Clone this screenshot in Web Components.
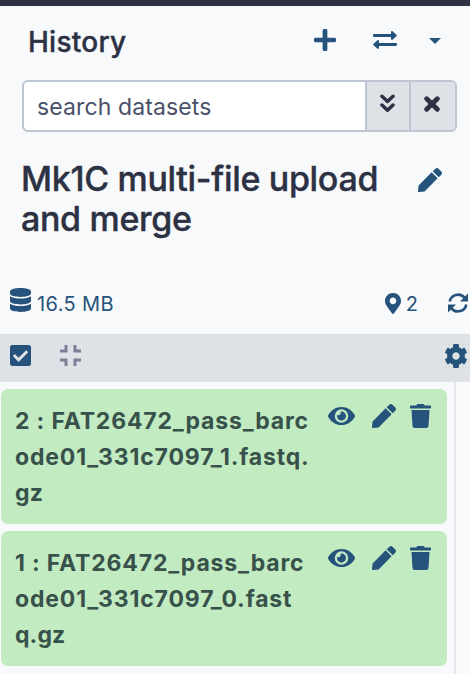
<!DOCTYPE html>
<html lang="en">
<head>
<meta charset="utf-8">
<title>History</title>
<style>
html,body{margin:0;height:100%;overflow:hidden}
body{font-family:Inter,"Liberation Sans",sans-serif;background:#f8f9fb;color:#2c3143}
</style>
</head>
<body>
<history-panel></history-panel>
<script>
const ICONS = {
  plus: ['0 32 448 448', '<path d="M416 208H272V64c0-17.67-14.33-32-32-32h-32c-17.67 0-32 14.33-32 32v144H32c-17.67 0-32 14.33-32 32v32c0 17.67 14.33 32 32 32h144v144c0 17.67 14.33 32 32 32h32c17.67 0 32-14.33 32-32V304h144c17.67 0 32-14.33 32-32v-32c0-17.67-14.33-32-32-32z"/>'],
  swap: ['0 0 24 18', '<path d="M1 3.1h17V1.2c0-1.1 1-1.5 1.8-.8l3.6 3.3c.6.5.6 1.1 0 1.6l-3.6 3.3c-.8.7-1.8.3-1.8-.8V5.9H1C.4 5.9 0 5.4 0 4.8v-.6c0-.6.4-1.1 1-1.1zM23 12.1H6v-1.9c0-1.1-1-1.5-1.8-.8L.6 12.7c-.6.5-.6 1.1 0 1.6l3.6 3.3c.8.7 1.8.3 1.8-.8v-1.9h17c.6 0 1-.5 1-1.1v-.6c0-.6-.4-1.1-1-1.1z"/>'],
  caret: ['0 0 12 6', '<path d="M0 0h12L6 6z"/>'],
  down: ['0 0 15 19', '<path d="M2 2.3l5.5 5.2L13 2.3M2 11l5.5 5.2L13 11" fill="none" stroke="currentColor" stroke-width="3.5" stroke-linecap="round" stroke-linejoin="round"/>'],
  close: ['0 0 16 16', '<path d="M2.7 2.7l10.6 10.6M13.3 2.7L2.7 13.3" fill="none" stroke="currentColor" stroke-width="4.8" stroke-linecap="round"/>'],
  pen: ['0 0 512 512', '<path d="M290.74 93.24l128.02 128.02-277.99 277.99-114.14 12.6C11.35 513.54-1.56 500.62.14 485.34l12.7-114.22 277.9-277.88zm207.2-19.06l-60.11-60.11c-18.75-18.75-49.16-18.75-67.91 0l-56.55 56.55 128.02 128.02 56.55-56.55c18.75-18.76 18.75-49.16 0-67.91z"/>'],
  database: ['0 0 448 512', '<path d="M448 73.143v45.714C448 159.143 347.667 192 224 192S0 159.143 0 118.857V73.143C0 32.857 100.333 0 224 0s224 32.857 224 73.143zM448 176v102.857C448 319.143 347.667 352 224 352S0 319.143 0 278.857V176c48.125 33.143 136.208 48.572 224 48.572S399.874 209.143 448 176zm0 160v102.857C448 479.143 347.667 512 224 512S0 479.143 0 438.857V336c48.125 33.143 136.208 48.572 224 48.572S399.874 369.143 448 336z"/>'],
  check: ['0 32 448 448', '<path d="M400 480H48c-26.51 0-48-21.49-48-48V80c0-26.51 21.49-48 48-48h352c26.51 0 48 21.49 48 48v352c0 26.51-21.49 48-48 48zm-204.686-98.059l184-184c6.248-6.248 6.248-16.379 0-22.627l-22.627-22.627c-6.248-6.248-16.379-6.249-22.628 0L184 302.745l-70.059-70.059c-6.248-6.248-16.379-6.248-22.628 0l-22.627 22.627c-6.248 6.248-6.248 16.379 0 22.627l104 104c6.249 6.249 16.379 6.249 22.628.001z"/>'],
  compress: ['0 32 448 448', '<path d="M436 192H312c-13.3 0-24-10.7-24-24V44c0-6.6 5.4-12 12-12h40c6.6 0 12 5.4 12 12v84h84c6.6 0 12 5.4 12 12v40c0 6.6-5.4 12-12 12zm-276-24V44c0-6.6-5.4-12-12-12h-40c-6.6 0-12 5.4-12 12v84H12c-6.6 0-12 5.4-12 12v40c0 6.6 5.4 12 12 12h124c13.3 0 24-10.7 24-24zm0 300V344c0-13.3-10.7-24-24-24H12c-6.6 0-12 5.4-12 12v40c0 6.6 5.4 12 12 12h84v84c0 6.6 5.4 12 12 12h40c6.6 0 12-5.4 12-12zm192 0v-84h84c6.6 0 12-5.4 12-12v-40c0-6.6-5.4-12-12-12H312c-13.3 0-24 10.7-24 24v124c0 6.6 5.4 12 12 12h40c6.6 0 12-5.4 12-12z"/>'],
  pin: ['0 0 384 512', '<path d="M172.268 501.67C26.97 291.031 0 269.413 0 192 0 85.961 85.961 0 192 0s192 85.961 192 192c0 77.413-26.97 99.031-172.268 309.67-9.535 13.774-29.93 13.773-39.464 0zM192 272c44.183 0 80-35.817 80-80s-35.817-80-80-80-80 35.817-80 80 35.817 80 80 80z"/>'],
  sync: ['0 0 20 20', '<g fill="none" stroke="currentColor" stroke-width="2.6"><path d="M1.7 8.6A8.5 8.5 0 0 1 16.6 4.7"/><path d="M18.3 11.4A8.5 8.5 0 0 1 3.4 15.3"/></g><path d="M20 .6V8.6h-8z M0 19.4V11.4h8z"/>'],
  cog: ['18 8 476 496', '<path d="M487.4 315.7l-42.6-24.6c4.3-23.2 4.3-47 0-70.2l42.6-24.6c4.9-2.8 7.1-8.6 5.5-14-11.1-35.6-30-67.8-54.7-94.6-3.8-4.1-10-5.1-14.8-2.3L380.8 110c-17.9-15.4-38.5-27.3-60.8-35.1V25.8c0-5.6-3.9-10.5-9.4-11.7-36.7-8.2-74.3-7.8-109.2 0-5.5 1.2-9.4 6.1-9.4 11.7V75c-22.2 7.9-42.8 19.8-60.8 35.1L88.7 85.5c-4.9-2.8-11-1.9-14.8 2.3-24.7 26.7-43.6 58.9-54.7 94.6-1.7 5.4.6 11.2 5.5 14L67.3 221c-4.3 23.2-4.3 47 0 70.2l-42.6 24.6c-4.9 2.8-7.1 8.6-5.5 14 11.1 35.6 30 67.8 54.7 94.6 3.8 4.1 10 5.1 14.8 2.3l42.6-24.6c17.9 15.4 38.5 27.3 60.8 35.1v49.2c0 5.6 3.9 10.5 9.4 11.7 36.7 8.2 74.3 7.8 109.2 0 5.5-1.2 9.4-6.1 9.4-11.7v-49.2c22.2-7.9 42.8-19.8 60.8-35.1l42.6 24.6c4.9 2.8 11 1.9 14.8-2.3 24.7-26.7 43.6-58.9 54.7-94.6 1.5-5.5-.7-11.3-5.6-14.1zM256 336c-44.1 0-80-35.9-80-80s35.9-80 80-80 80 35.9 80 80-35.9 80-80 80z"/>'],
  eye: ['0 64 576 384', '<path d="M572.52 241.4C518.29 135.59 410.93 64 288 64S57.68 135.64 3.48 241.41a32.35 32.35 0 0 0 0 29.19C57.71 376.41 165.07 448 288 448s230.32-71.64 284.52-177.41a32.35 32.35 0 0 0 0-29.19zM288 400a144 144 0 1 1 144-144 143.93 143.93 0 0 1-144 144zm0-240a95.31 95.31 0 0 0-25.31 3.79 47.85 47.85 0 0 1-66.9 66.9A95.78 95.78 0 1 0 288 160z"/>'],
  trash: ['0 0 448 512', '<path d="M432 32H312l-9.4-18.7A24 24 0 0 0 281.1 0H166.8a23.72 23.72 0 0 0-21.4 13.3L136 32H16A16 16 0 0 0 0 48v32a16 16 0 0 0 16 16h416a16 16 0 0 0 16-16V48a16 16 0 0 0-16-16zM53.2 467a48 48 0 0 0 47.9 45h245.8a48 48 0 0 0 47.9-45L416 128H32z"/>']
};

customElements.define('ui-icon', class extends HTMLElement {
  constructor() {
    super();
    this.attachShadow({mode: 'open'});
  }
  connectedCallback() {
    const [box, body] = ICONS[this.getAttribute('name')];
    const w = this.getAttribute('w'), h = this.getAttribute('h');
    this.shadowRoot.innerHTML = `<style>:host{display:block;flex:none;width:${w}px;height:${h}px}svg{display:block;width:100%;height:100%;fill:currentColor}</style><svg viewBox="${box}" preserveAspectRatio="none" aria-hidden="true">${body}</svg>`;
  }
});

function define(name, css, html) {
  const t = document.createElement('template');
  t.innerHTML = `<style>*{box-sizing:border-box}${css}</style>${html}`;
  customElements.define(name, class extends HTMLElement {
    constructor() {
      super();
      this.attachShadow({mode: 'open'}).append(t.content.cloneNode(true));
    }
  });
}

define('panel-header', `
  :host{display:flex;box-sizing:border-box;height:74px;padding:0 29px 0 28px;align-items:flex-start;color:#25537b}
  h2{margin:17px auto 0 0;font-size:28px;line-height:38px;font-weight:500;letter-spacing:.25px;-webkit-text-stroke:.4px currentColor;color:#2c3143}
  ui-icon{margin-top:23px}
  .swap{margin:25px 32px 0 37px}
  .caret{margin-top:32px}`,
  `<h2><slot></slot></h2><ui-icon name="plus" w="22" h="22"></ui-icon><ui-icon class="swap" name="swap" w="24" h="18"></ui-icon><ui-icon class="caret" name="caret" w="12" h="6"></ui-icon>`);

define('search-box', `
  :host{display:flex;box-sizing:border-box;width:435px;height:52px;margin-left:22px;border:2px solid #bdc6d2;border-radius:6px;overflow:hidden;background:#fff}
  .field{flex:1;padding-left:13px;font-size:23px;line-height:50px;letter-spacing:.12px;color:#495169}
  .btn{display:flex;align-items:flex-start;border-left:2px solid #bdc6d2;background:#dee1e6;width:44px;padding:12px 0 0 13px;color:#2c3143}
  .btn+.btn{width:46px;padding-top:14px}`,
  `<div class="field"><slot></slot></div><div class="btn"><ui-icon name="down" w="15" h="19"></ui-icon></div><div class="btn"><ui-icon name="close" w="16" h="16"></ui-icon></div>`);

define('history-name', `
  :host{display:flex;box-sizing:border-box;height:156px;padding:27px 28px 0 21px;justify-content:space-between}
  h1{margin:0;width:380px;font-size:34px;line-height:40px;font-weight:500;letter-spacing:-.32px;-webkit-text-stroke:.4px currentColor}
  ui-icon{margin-top:9px;color:#25537b}`,
  `<h1><slot></slot></h1><ui-icon name="pen" w="24" h="24"></ui-icon>`);

define('history-stats', `
  :host{display:flex;box-sizing:border-box;height:46px;padding:0 2px 0 10px;color:#25537b;font-size:20px;line-height:32px}
  .size{margin:0 auto 0 6px;letter-spacing:.4px}
  .pin{margin:5px 5px 0 0}
  .sync{margin:5px 0 0 30px}`,
  `<ui-icon name="database" w="21" h="24"></ui-icon><span class="size"><slot name="size"></slot></span><ui-icon class="pin" name="pin" w="16" h="21"></ui-icon><span><slot name="count"></slot></span><ui-icon class="sync" name="sync" w="20" h="20"></ui-icon>`);

define('action-bar', `
  :host{display:flex;box-sizing:border-box;height:48px;padding:11px 3px 0 10px;background:#dee1e6;color:#25537b}
  .compress{margin:0 auto 0 29px;color:#7c8097}
  .cog{margin-top:-1px}`,
  `<ui-icon name="check" w="21" h="21"></ui-icon><ui-icon class="compress" name="compress" w="21" h="21"></ui-icon><ui-icon class="cog" name="cog" w="22" h="24"></ui-icon>`);

define('dataset-item', `
  :host{display:flex;box-sizing:border-box;width:446px;height:135px;padding:14px 16px 0 14px;border-radius:7px;background:#c2ebc2;color:#38524b;align-items:flex-start}
  .name{flex:none;width:301px;font-size:23px;line-height:36px;font-weight:700;letter-spacing:.84px;white-space:nowrap}
  .tools{display:flex;margin-left:auto;color:#25537b;padding-top:1px}
  .eye{margin-top:3px}
  .pen{margin:0 14px 0 17px}`,
  `<div class="name"><slot></slot></div><div class="tools"><ui-icon class="eye" name="eye" w="27" h="18"></ui-icon><ui-icon class="pen" name="pen" w="24" h="24"></ui-icon><ui-icon name="trash" w="21" h="24"></ui-icon></div>`);

define('dataset-list', `
  :host{display:flex;height:292px;background:#fafafa}
  .list{display:flex;flex-direction:column;gap:7px;box-sizing:border-box;width:456px;height:100%;padding:7px 0 0 1px;background:#f8f9fb;border-right:2px solid #e5e6e9}`,
  `<div class="list"><slot></slot></div>`);

define('history-panel', `
  :host{display:block;box-sizing:border-box;width:470px;height:674px;border-top:6px solid #2c3143;overflow:hidden}
  .tail{letter-spacing:.1px}`,
  `<panel-header>History</panel-header>
  <search-box>search datasets</search-box>
  <history-name>Mk1C multi-file upload and merge</history-name>
  <history-stats><span slot="size">16.5 MB</span><span slot="count">2</span></history-stats>
  <action-bar></action-bar>
  <dataset-list><dataset-item>2 : FAT26472_pass_barc<br>ode01_331c7097_1.fastq.<br><span class="tail">gz</span></dataset-item><dataset-item>1 : FAT26472_pass_barc<br>ode01_331c7097_0.fast<br><span class="tail">q.gz</span></dataset-item></dataset-list>`);
</script>
</body>
</html>
